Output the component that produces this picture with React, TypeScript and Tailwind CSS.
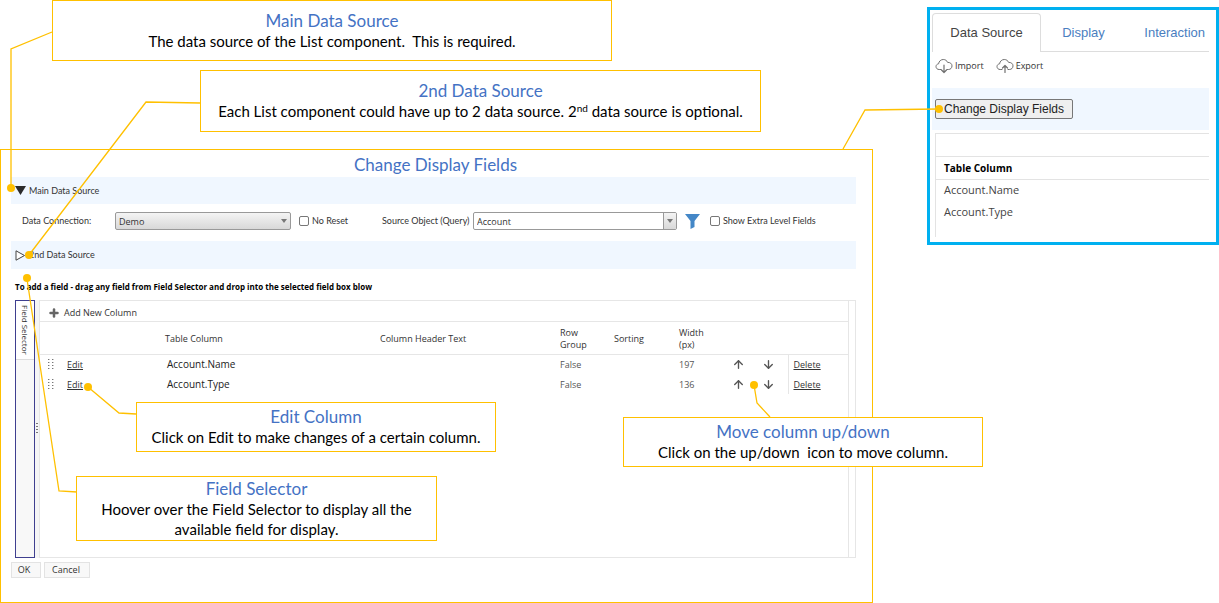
import React from "react";
import { Plus, ArrowUp, ArrowDown } from "lucide-react";

type CalloutProps = {
  title: string;
  className: string;
  children: React.ReactNode;
};

function Callout({ title, className, children }: CalloutProps) {
  return (
    <section
      className={`flex flex-col items-center justify-center border border-[#ffc000] bg-white text-center font-[Lato,sans-serif] text-[15px] leading-5 text-black ${className}`}
    >
      <h2 className="text-[17px] leading-5 text-[#4472c4]">{title}</h2>
      <p className="whitespace-pre-wrap">{children}</p>
    </section>
  );
}

function CloudIcon({ up }: { up: boolean }) {
  return (
    <svg width="18" height="16" viewBox="0 0 18 16" fill="none" stroke="#707070" strokeWidth="1" strokeLinecap="round" strokeLinejoin="round">
      <path d="M6 11.5H4.2C2.2 11.5 1 10.2 1 8.6 1 7.1 2.1 6 3.6 5.8 3.9 3.2 5.9 1.5 8.3 1.5c2 0 3.6 1.1 4.3 2.9 2.5-.2 4.4 1.3 4.4 3.5 0 2.1-1.5 3.6-3.6 3.6H12" />
      {up ? <path d="M9 14.5V7.5M6.5 10 9 7.5l2.5 2.5" strokeWidth="1.2" /> : <path d="M9 7v7.5M6.5 12 9 14.5l2.5-2.5" strokeWidth="1.2" />}
    </svg>
  );
}

function Caret() {
  return (
    <svg width="6" height="4" viewBox="0 0 6 4" className="pointer-events-none">
      <path d="M0 0h6L3 4z" fill="#777" />
    </svg>
  );
}

function Grip() {
  return (
    <svg width="6" height="10" viewBox="0 0 6 10" fill="#777">
      {[0, 3, 6, 9].map((y) => (
        <g key={y}>
          <rect x="0" y={y} width="1.4" height="1" />
          <rect x="4" y={y} width="1.4" height="1" />
        </g>
      ))}
    </svg>
  );
}

const rows = [
  { name: "Account.Name", group: "False", width: 197 },
  { name: "Account.Type", group: "False", width: 136 },
];

function ColumnTable() {
  return (
    <table className="w-full table-fixed border-collapse text-left font-['Open_Sans',sans-serif] text-[9px] leading-3 text-[#333]">
      <colgroup>
        <col className="w-[27px]" />
        <col className="w-[98px]" />
        <col className="w-[215px]" />
        <col />
        <col className="w-[54px]" />
        <col className="w-[65px]" />
        <col className="w-[53px]" />
        <col className="w-[30px]" />
        <col className="w-[26px]" />
        <col className="w-[60px]" />
      </colgroup>
      <thead>
        <tr className="h-8 border-b border-[#e6e6e6]">
          <th /><th />
          <th className="p-0 pt-0.5 font-normal">Table Column</th>
          <th className="p-0 pt-0.5 font-normal">Column Header Text</th>
          <th className="p-0 pt-0.5 font-normal">Row<br />Group</th>
          <th className="p-0 pt-0.5 font-normal">Sorting</th>
          <th className="p-0 pt-0.5 font-normal">Width<br />(px)</th>
          <th /><th /><th />
        </tr>
      </thead>
      <tbody>
        {rows.map((r) => (
          <tr key={r.name} className="h-5">
            <td className="pl-2"><Grip /></td>
            <td className="pt-0.5"><a href="#edit" className="underline">Edit</a></td>
            <td className="pl-0.5 text-[10px] text-[#222]">{r.name}</td>
            <td />
            <td className="pt-0.5 text-[#555]">{r.group}</td>
            <td />
            <td className="pt-0.5 text-[#555]">{r.width}</td>
            <td><button type="button" aria-label="Move up" className="block"><ArrowUp size={13} strokeWidth={2.5} color="#555" /></button></td>
            <td><button type="button" aria-label="Move down" className="block"><ArrowDown size={13} strokeWidth={2.5} color="#555" /></button></td>
            <td className="border-l border-[#e6e6e6] pt-0.5 pl-[5px]"><a href="#delete" className="underline">Delete</a></td>
          </tr>
        ))}
      </tbody>
    </table>
  );
}

function FieldsDialog() {
  return (
    <section className="mt-[17px] border border-[#ffc000] pr-4 pb-6 pl-[10px] font-[Lato,sans-serif] text-[9px] text-[#333]">
      <h2 className="flex h-[27px] items-center justify-center pt-0.5 pl-1 text-[17px] text-[#4472c4]">Change Display Fields</h2>
      <button type="button" className="flex h-[27px] w-full items-center gap-[3px] bg-[#f0f7ff] pl-1">
        <svg width="11" height="9" viewBox="0 0 11 9"><path d="M0 0h11L5.500 9z" fill="#2b2b2b" /></svg>
        Main Data Source
      </button>
      <form className="flex h-[37px] items-center pb-[3px] pl-[11px]">
        <label htmlFor="connection" className="w-[93px] shrink-0">Data Connection:</label>
        <div className="grid shrink-0 items-center">
          <select id="connection" className="col-start-1 row-start-1 h-[18px] w-44 appearance-none rounded-xs border border-[#999] bg-linear-to-b from-[#f4f4f4] to-[#d8d8d8] pt-0.5 pl-[3px] font-['Open_Sans',sans-serif] text-[9px]">
            <option>Demo</option>
          </select>
          <span className="pointer-events-none col-start-1 row-start-1 justify-self-end pr-1"><Caret /></span>
        </div>
        <label className="ml-2 flex w-[83px] shrink-0 items-center gap-[3px]">
          <input type="checkbox" className="size-[10px] appearance-none rounded-xs border border-[#777] bg-white" />
          No Reset
        </label>
        <label htmlFor="source" className="w-[91px] shrink-0 whitespace-nowrap">Source Object (Query)</label>
        <div className="flex h-[18px] w-[204px] shrink-0 overflow-hidden rounded-xs border border-[#999]">
          <input id="source" type="text" defaultValue="Account" className="min-w-0 flex-1 pt-0.5 pl-[3px] font-['Open_Sans',sans-serif] text-[9px]" />
          <button type="button" aria-label="Open list" className="flex w-[13px] items-center justify-center border-l border-[#999] bg-linear-to-b from-[#f4f4f4] to-[#d8d8d8]"><Caret /></button>
        </div>
        <button type="button" aria-label="Filter" className="ml-2 shrink-0">
          <svg width="15" height="15" viewBox="0 0 15 15"><path d="M0 0h15L9.500 7v6L5.500 15V7z" fill="#4487c7" /></svg>
        </button>
        <label className="ml-[10px] flex items-center gap-[3px] whitespace-nowrap">
          <input type="checkbox" className="size-[10px] appearance-none rounded-xs border border-[#777] bg-white" />
          Show Extra Level Fields
        </label>
      </form>
      <button type="button" className="flex h-7 w-full items-center gap-[3px] bg-[#f0f7ff] pl-1">
        <svg width="11" height="11" viewBox="0 0 11 11"><path d="M1 .8v9.400L9.500 5.500z" fill="#fff" stroke="#444" /></svg>
        2nd Data Source
      </button>
      <p className="flex h-[31px] items-center pt-1 pl-1 font-['Open_Sans',sans-serif] text-[8px] font-bold text-black">
        To add a field - drag any field from Field Selector and drop into the selected field box blow
      </p>
      <div className="ml-1 flex h-[258px]">
        <aside className="w-5 border border-[#3f3f8f] bg-[#f8f8f8]">
          <div className="flex h-[59px] w-full flex-col items-center justify-center border-b border-[#ddd] bg-white font-['Open_Sans',sans-serif] text-[8px] leading-none">
            <span className="whitespace-nowrap [writing-mode:vertical-rl]">Field Selector</span>
          </div>
        </aside>
        <div className="flex w-1 items-center justify-center bg-[#f5f5f5]">
          <svg width="2" height="12" viewBox="0 0 2 12" fill="#777"><path d="M0 0h2v1H0zM0 3h2v1H0zM0 6h2v1H0zM0 9h2v1H0z" /></svg>
        </div>
        <div className="flex-1 border border-[#e6e6e6] pr-1.5">
          <div className="h-full border-r border-[#e6e6e6]">
            <button type="button" className="flex h-[21px] w-full items-center gap-1 border-b border-[#e6e6e6] pt-1 pl-2 font-['Open_Sans',sans-serif]">
              <Plus size={12} strokeWidth={5} color="#666" />
              Add New Column
            </button>
            <ColumnTable />
          </div>
        </div>
      </div>
      <div className="mt-1 flex gap-[3px] font-['Open_Sans',sans-serif]">
        <button type="button" className="h-4 w-[30px] border border-[#e3e3e3] bg-[#f8f8f8] pr-1">OK</button>
        <button type="button" className="h-4 w-[46px] border border-[#e3e3e3] bg-[#f8f8f8] pr-0.5">Cancel</button>
      </div>
    </section>
  );
}

function SidePanel() {
  return (
    <aside className="mt-[7px] w-[292px] shrink-0 self-start border-3 border-[#00b0f0] pt-[3px] pr-[7px] pb-[5px] pl-0.5">
      <nav className="flex font-['Liberation_Sans',sans-serif] text-[13px] text-[#4a7ebf]">
        <a href="#data" className="flex h-[39px] w-[109px] items-center justify-center rounded-t border border-b-0 border-[#ddd] text-[#444]">Data Source</a>
        <a href="#display" className="flex flex-1 items-center justify-center border-b border-[#ddd] pt-px">Display</a>
        <a href="#interaction" className="flex w-[83px] items-center justify-end border-b border-[#ddd] pt-px pr-1">Interaction</a>
      </nav>
      <div className="flex h-9 items-start gap-3 pt-1.5 pl-[3px] font-['Open_Sans',sans-serif] text-[9px] text-[#333]">
        <button type="button" className="flex items-center gap-0.5"><CloudIcon up={false} />Import</button>
        <button type="button" className="flex items-center gap-0.5"><CloudIcon up />Export</button>
      </div>
      <div className="flex h-[42px] items-center bg-[#f0f7ff] pl-[3px]">
        <button type="button" className="h-5 w-[138px] rounded-xs border border-[#777] bg-[#efefef] font-['Liberation_Sans',sans-serif] text-xs text-[#222]">Change Display Fields</button>
      </div>
      <div className="mt-[3px] ml-[3px] h-[104px] border-t border-l border-[#e3e3e3]">
        <table className="w-full border-collapse text-left font-['Open_Sans',sans-serif] text-[11px] text-[#444]">
          <thead>
            <tr className="h-[22px] border-b border-[#e3e3e3]"><td /></tr>
            <tr className="h-[23px] border-b border-[#e3e3e3] text-[10px] text-black"><th className="pt-0.5 pl-2">Table Column</th></tr>
          </thead>
          <tbody>
            {rows.map((r) => (
              <tr key={r.name} className="h-[22px]"><td className="pl-2">{r.name}</td></tr>
            ))}
          </tbody>
        </table>
      </div>
    </aside>
  );
}

function Connectors() {
  return (
    <svg className="pointer-events-none absolute top-0 left-0" width="1219" height="603" viewBox="0 0 1219 603" fill="none" stroke="#ffc000" strokeWidth="1.3">
      <path d="M52 32 11 49V188M200 103 146 102 29 255M77 492 59 491 27 279M136 414 119 413 88 387M770 417 757 403 754 385M843 149 865 110 939 109" />
      <g fill="#ffc000" stroke="none">
        <circle cx="11" cy="188" r="4" />
        <circle cx="29" cy="255" r="4" />
        <circle cx="27" cy="278" r="4" />
        <circle cx="88" cy="387" r="4" />
        <circle cx="754" cy="385" r="4" />
        <circle cx="939" cy="109" r="4" />
      </g>
    </svg>
  );
}

export default function App() {
  return (
    <main className="relative flex gap-[54px] bg-white">
      <div className="min-w-0 flex-1">
        <Callout title="Main Data Source" className="ml-[52px] h-[61px] w-[560px]">
          {"The data source of the List component.  This is required."}
        </Callout>
        <Callout title="2nd Data Source" className="mt-[9px] ml-[200px] h-[62px] w-[561px]">
          Each List component could have up to 2 data source. 2<sup className="text-[10px]">nd</sup> data source is optional.
        </Callout>
        <FieldsDialog />
      </div>
      <SidePanel />
      <Connectors />
      <Callout title="Edit Column" className="absolute top-[402px] left-[136px] h-[50px] w-[360px]">
        Click on Edit to make changes of a certain column.
      </Callout>
      <Callout title="Move column up/down" className="absolute top-[417px] left-[623px] h-[50px] w-[360px]">
        {"Click on the up/down  icon to move column."}
      </Callout>
      <Callout title="Field Selector" className="absolute top-[476px] left-[76px] h-[65px] w-[361px] px-5">
        Hoover over the Field Selector to display all the available field for display.
      </Callout>
    </main>
  );
}
